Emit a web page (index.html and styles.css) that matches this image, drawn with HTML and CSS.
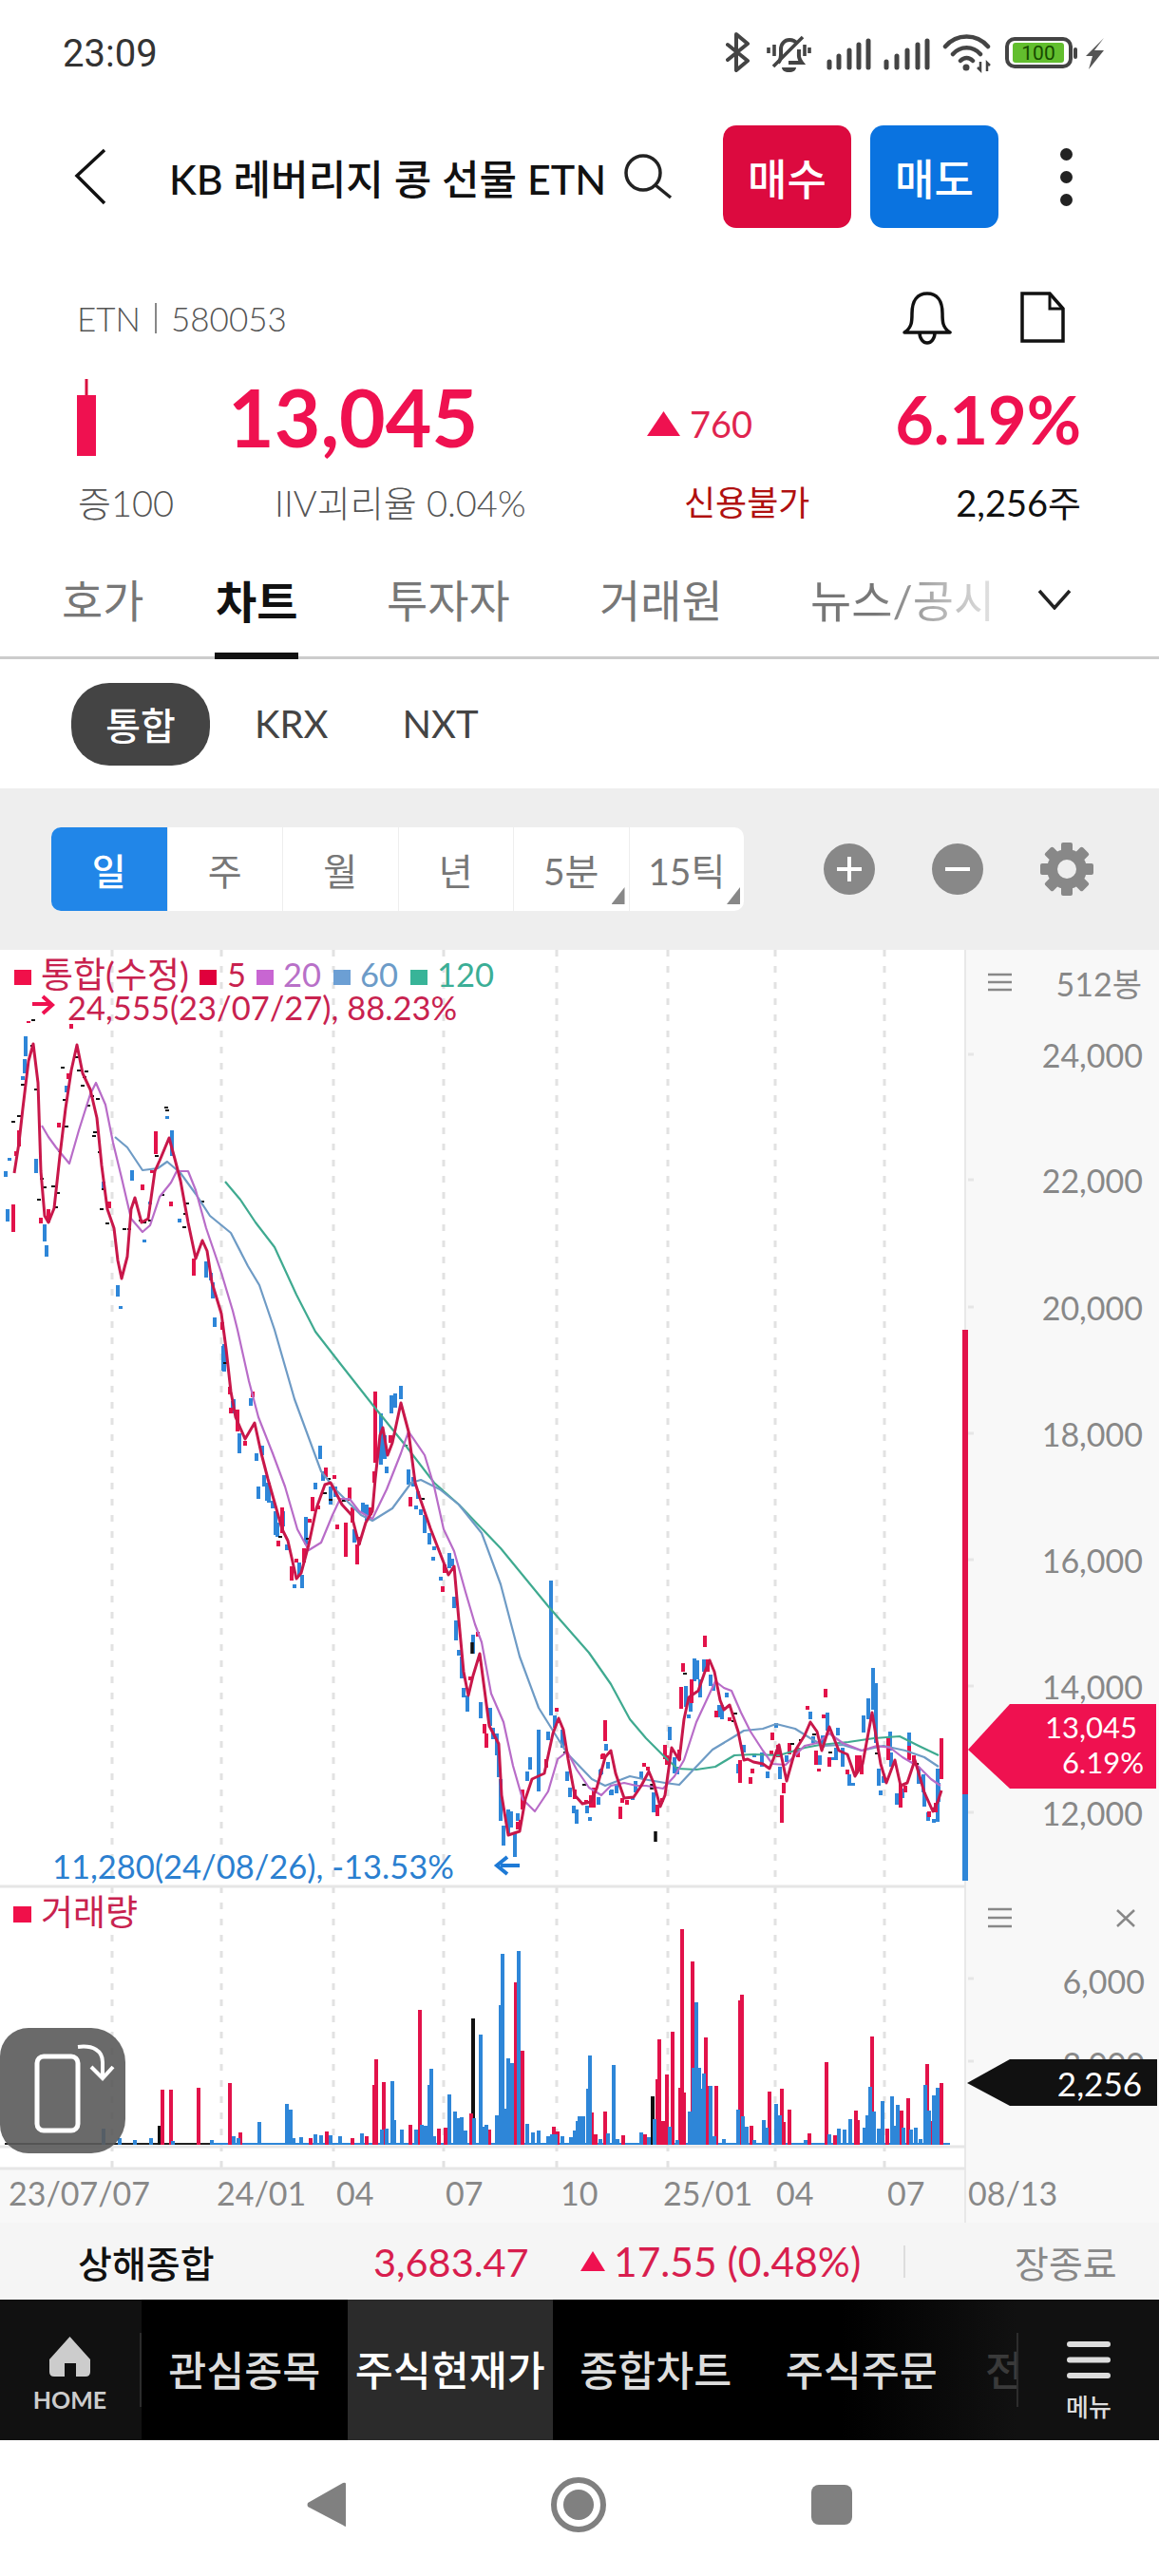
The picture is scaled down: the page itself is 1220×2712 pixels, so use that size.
FILE: index.html
```html
<!DOCTYPE html>
<html lang="ko">
  <head>
    <meta charset="UTF-8" />
    <meta name="viewport" content="width=device-width, initial-scale=1.0" />
    <title>KB 레버리지 콩 선물 ETN</title>
    <link rel="stylesheet" href="styles.css">
  </head>
  <body>
    <div class="status-bar">
      <span class="clock">23:09</span>
      <svg class="status-icons" width="400" height="50" viewBox="764 30 400 50">
        <path d="M766 47L787 64L775 74V36L787 46L766 63" fill="none" stroke="#444" stroke-width="4" stroke-linejoin="round" stroke-linecap="round"/>
        <path d="M819 66c4-3 3-9 3-14c0-6 4-10 9-10c3 0 6 1 8 4M841 52c0 6-1 9 3 14h-14" fill="none" stroke="#444" stroke-width="4"/>
        <path d="M814 70L845 39M809 50v6M815 47v12M847 47v12M852 50v6" fill="none" stroke="#444" stroke-width="3.6"/>
        <path d="M823 71h15c0 3-3 5-7.500 5s-7.500-2-7.500-5z" fill="#444"/>
        <path d="M873 65v6M883 59v12M894 53v18M904 47v24M914 43v28M933 65v6M944 59v12M955 53v18M966 47v24M976 43v28" fill="none" stroke="#444" stroke-width="5" stroke-linecap="round"/>
        <path d="M995 49c12-14 33-14 45 0M1003 57c8-9 21-9 29 0M1011 64c4-4 9-4 13 0" fill="none" stroke="#444" stroke-width="4.500" stroke-linecap="round"/>
        <circle cx="1017" cy="71" r="3.500" fill="#444"/>
        <path d="M1032 65v9l-3-3M1039 75v-9l3 3" fill="none" stroke="#444" stroke-width="2.500"/>
        <rect x="1060" y="41" width="67" height="29" rx="8" fill="#fff" stroke="#444" stroke-width="4"/>
        <rect x="1066" y="45" width="54" height="21" rx="3" fill="#62be2e"/>
        <text class="battery-text" x="1093" y="56">100</text>
        <rect x="1130" y="50" width="4" height="12" rx="2" fill="#444"/>
        <path d="M1162 40L1152 53L1162 53L1146 73L1150 59L1143 59Z" fill="#555"/>
      </svg>
    </div>

    <div class="header">
      <svg class="back" width="34" height="60" viewBox="0 0 34 60"><path d="M32 2L3 29L32 58" fill="none" stroke="#111" stroke-width="3.500"/></svg>
      <div class="title">KB 레버리지 콩 선물 ETN</div>
      <div class="search">
        <svg width="52" height="48" viewBox="0 0 52 48"><circle cx="21" cy="20" r="18" fill="none" stroke="#222" stroke-width="3.500"/><path d="M34 33L50 46" stroke="#222" stroke-width="3.500"/></svg>
      </div>
      <div class="order-btn buy">매수</div>
      <div class="order-btn sell">매도</div>
      <div class="kebab"><i></i><i></i><i></i></div>
    </div>

    <div class="code-row">
      <span>ETN</span><span class="bar"></span><span>580053</span>
      <svg class="bell" width="52" height="56" viewBox="950 307 52 56">
        <path d="M952 350c8-5 8-12 8-20c0-14 6-21 16-21s16 7 16 21c0 8 0 15 8 20z" fill="none" stroke="#111" stroke-width="3.500" stroke-linejoin="round"/>
        <path d="M968 350c0 7 4 11 8 11s8-4 8-11" fill="none" stroke="#111" stroke-width="3.500"/>
      </svg>
      <svg class="doc" width="47" height="56" viewBox="1074 307 47 56">
        <path d="M1076 309H1105L1119 325V359H1076Z" fill="none" stroke="#111" stroke-width="3.500"/>
        <path d="M1105 309V325H1119" fill="none" stroke="#111" stroke-width="3"/>
      </svg>
    </div>

    <div class="price-row">
      <svg width="20" height="84" viewBox="0 0 20 84"><path d="M10 0V18" stroke="#d8103f" stroke-width="3"/><rect y="17" width="20" height="64" fill="#ef1150"/></svg>
      <div class="price">13,045</div>
      <div class="change"><svg width="35" height="26" viewBox="0 0 35 26"><path d="M17.500 0L35 26H0Z" fill="#ef1150"/></svg><span>760</span></div>
      <div class="rate">6.19%</div>
    </div>

    <div class="meta-row">
      <span>증100</span>
      <span>IIV괴리율 0.04%</span>
      <span class="credit">신용불가</span>
      <span class="volume">2,256주</span>
    </div>

    <div class="tabs">
      <div class="tab">호가</div>
      <div class="tab active">차트</div>
      <div class="tab">투자자</div>
      <div class="tab">거래원</div>
      <div class="tab faded">뉴스/공시</div>
      <svg class="tab-more" width="36" height="22" viewBox="0 0 36 22"><path d="M2 2L18 20L34 2" fill="none" stroke="#222" stroke-width="3.500"/></svg>
    </div>

    <div class="market-tabs">
      <div class="market on">통합</div>
      <div class="market krx">KRX</div>
      <div class="market">NXT</div>
    </div>

    <div class="toolbar">
      <div class="periods">
        <div class="period on">일</div>
        <div class="period">주</div>
        <div class="period">월</div>
        <div class="period">년</div>
        <div class="period more">5분</div>
        <div class="period more">15틱</div>
      </div>
      <svg class="tool" width="54" height="54" viewBox="-27 -27 54 54"><circle r="27" fill="#888"/><path d="M-13 0H13M0 -13V13" stroke="#fff" stroke-width="4"/></svg>
      <svg class="tool minus" width="54" height="54" viewBox="-27 -27 54 54"><circle r="27" fill="#888"/><path d="M-13 0H13" stroke="#fff" stroke-width="4"/></svg>
      <svg class="tool gear" width="56" height="56" viewBox="-28 -28 56 56">
        <g fill="#888">
          <circle r="21"/>
          <rect x="-6" y="-28" width="12" height="56" rx="2"/>
          <rect x="-6" y="-28" width="12" height="56" rx="2" transform="rotate(45)"/>
          <rect x="-6" y="-28" width="12" height="56" rx="2" transform="rotate(90)"/>
          <rect x="-6" y="-28" width="12" height="56" rx="2" transform="rotate(135)"/>
        </g>
        <circle r="10" fill="#eee"/>
      </svg>
    </div>

    <div class="chart">
      <svg class="chart-svg" width="1220" height="1340" viewBox="0 1000 1220 1340">
        <!-- 축 배경 -->
        <rect x="1016" y="1000" width="204" height="1340" fill="#f8f8f8"/>
        <rect x="0" y="2284" width="1016" height="56" fill="#f8f8f8"/>
        <path d="M1016 1000V2340" stroke="#e8e8e8" stroke-width="2"/>
        <path class="grid" d="M118 1000V2282M233 1000V2282M351 1000V2282M467 1000V2282M586 1000V2282M703 1000V2282M816 1000V2282M931 1000V2282"/>
        <path d="M0 1986H1016M0 2260H1016M0 2283H1016" stroke="#e6e6e6" stroke-width="3"/>
        <path d="M1019 1110h6M1019 1242h6M1019 1376h6M1019 1509h6M1019 1642h6M1019 1775h6M1019 1908h6M1019 2083h6M1019 2170h6" stroke="#e6e6e6" stroke-width="3"/>

        <!-- 캔들 -->
        <path class="candle down" d="M8 1273V1286M27 1091V1112M26 1115V1130M24 1133V1137M6 1233V1239M10 1219V1222M38 1220V1235M47 1289V1307M49 1311V1323M70 1143V1150M109 1244V1251M139 1232V1243M124 1353V1365M127 1375V1378M181 1190V1217M176 1175V1178M158 1265V1268M189 1283V1287M152 1305V1308M217 1328V1345M222 1340V1348M224 1350V1367M226 1387V1397M235 1417V1443M246 1473V1487M264 1472V1480M236 1415V1444M245 1475V1488M252 1509V1530M270 1530V1538M276 1522V1532M278 1553V1565M272 1565V1578M281 1561V1580M283 1561V1582M287 1580V1588M290 1591V1616M292 1603V1618M298 1591V1607M302 1626V1632M315 1645V1660M318 1658V1672M310 1668V1672M322 1597V1626M337 1522V1536M332 1561V1568M340 1549V1559M348 1565V1584M353 1565V1576M373 1610V1624M382 1582V1593M386 1584V1601M412 1469V1488M416 1467V1482M422 1459V1473M401 1488V1542M405 1511V1536M407 1544V1551M430 1547V1563M435 1555V1565M440 1570V1578M438 1585V1589M443 1589V1595M447 1595V1614M452 1614V1626M457 1628V1632M456 1639V1643M464 1660V1664M473 1635V1651M476 1641V1649M478 1681V1693M480 1706V1727M483 1737V1743M486 1744V1767M488 1777V1787M492 1785V1802M498 1721V1741M506 1792V1809M516 1798V1817M519 1819V1831M523 1825V1848M525 1848V1871M527 1873V1917M530 1922V1943M535 1905V1930M538 1907V1924M542 1930V1955M545 1909V1917M555 1865V1875M558 1850V1863M567 1821V1886M580 1664V1806M577 1823V1832M584 1806V1819M592 1821V1840M597 1865V1875M600 1882V1892M607 1905V1920M604 1901V1909M618 1901V1909M621 1913V1917M632 1863V1869M638 1836V1840M630 1892V1899M644 1884V1890M621 1913V1917M630 1892V1900M633 1862V1868M638 1838V1843M640 1855V1862M643 1885V1890M649 1878V1888M669 1875V1887M666 1892V1895M675 1865V1872M688 1887V1908M705 1818V1832M710 1850V1867M713 1860V1868M722 1775V1797M725 1805V1809M727 1787V1802M731 1746V1770M734 1748V1768M737 1768V1787M741 1747V1760M748 1763V1775M751 1773V1780M765 1782V1787M760 1795V1810M757 1795V1808M777 1857V1867M783 1837V1845M794 1846V1850M802 1845V1860M808 1865V1872M817 1814V1819M821 1860V1873M828 1848V1855M853 1802V1810M856 1828V1835M863 1848V1858M871 1803V1822M866 1827V1840M882 1819V1827M877 1850V1853M880 1840V1853M887 1840V1860M894 1868V1880M898 1877V1880M909 1806V1824M914 1788V1810M919 1756V1800M922 1772V1835M925 1862V1880M927 1885V1890M930 1870V1877M937 1823V1843M938 1845V1860M944 1888V1900M950 1883V1893M957 1824V1850M967 1860V1878M972 1868V1887M973 1887V1902M977 1908V1917M983 1915V1919M987 1862V1918M988 1877V1897"/>
        <path class="candle up" d="M14 1268V1297M20 1190V1207M17 1212V1217M43 1282V1288M51 1273V1287M72 1130V1136M62 1182V1187M75 1078V1083M164 1191V1215M150 1247V1253M180 1265V1270M204 1325V1343M115 1265V1272M160 1232V1235M234 1392V1400M242 1460V1468M30 1075V1077M243 1482V1488M250 1484V1507M258 1517V1522M266 1465V1471M297 1587V1614M293 1622V1628M307 1649V1664M312 1641V1645M320 1630V1645M326 1599V1603M329 1576V1591M335 1585V1589M343 1545V1555M352 1553V1557M355 1605V1610M364 1603V1639M368 1566V1580M371 1587V1603M376 1626V1647M378 1618V1626M390 1587V1595M395 1465V1540M394 1549V1561M411 1511V1519M430 1509V1513M432 1576V1586M468 1647V1656M466 1670V1676M495 1765V1769M503 1718V1723M510 1815V1825M512 1825V1840M550 1884V1905M545 1918V1926M548 1916V1920M575 1852V1861M586 1798V1802M637 1811V1833M635 1846V1850M605 1884V1894M617 1895V1899M625 1882V1903M634 1847V1852M653 1902V1915M655 1893V1898M660 1895V1900M622 1890V1903M692 1900V1912M697 1893V1897M678 1856V1860M682 1860V1864M700 1837V1852M702 1848V1858M715 1842V1853M719 1751V1760M717 1776V1799M728 1768V1793M742 1722V1734M745 1747V1760M754 1801V1808M768 1808V1812M779 1853V1877M790 1871V1878M792 1862V1867M813 1824V1832M812 1843V1847M819 1837V1850M823 1890V1919M825 1877V1888M831 1835V1847M840 1840V1850M850 1796V1800M869 1778V1787M867 1805V1809M859 1843V1858M862 1862V1865M873 1850V1860M892 1863V1868M902 1848V1867M905 1848V1863M907 1858V1868M935 1830V1853M948 1878V1903M953 1880V1887M957 1838V1853M962 1848V1858M978 1907V1913M985 1898V1908M991 1830V1873"/>
        <path class="tick" d="M12 1181h4M18 1175h4M22 1142h4M33 1074h4M32 1101h4M36 1147h4M42 1241h4M45 1250h4M54 1249h4M59 1256h4M39 1263h4M57 1271h4M61 1212h4M68 1186h4M66 1158h4M64 1124h4M79 1113h4M81 1127h4M89 1128h4M87 1134h4M85 1143h4M95 1154h4M101 1157h4M91 1164h4M98 1192h4M97 1196h4M103 1213h4M107 1252h4M105 1273h4M111 1288h4M129 1294h4M134 1294h4M163 1217h4M173 1166h4M174 1169h4M169 1258h4M146 1285h4M150 1287h4M156 1285h4M187 1236h4M195 1267h4M193 1278h4M192 1292h4M211 1265h4M235 1435h4M293 1618h4M322 1620h4M344 1557h4M340 1572h4M346 1579h4M360 1580h4M425 1522h4M443 1578h4M593 1845h4M613 1879h4M684 1881h4M719 1762h4M770 1812h4M772 1804h4M832 1836h4M841 1832h4M855 1826h4M872 1845h4M921 1846h4M963 1857h4"/>
        <path d="M497 1729V1741M690 1928V1939M686 1878V1884" stroke="#111" stroke-width="3.500"/>

        <!-- 이동평균선 -->
        <polyline class="ma ma120" points="237,1244 253,1263 269,1287 289,1313 312,1363 332,1402 360,1438 393,1480 427,1522 457,1561 483,1584 527,1630 577,1691 620,1740 643,1773 663,1810 680,1830 698,1848 713,1862 733,1863 753,1860 773,1848 793,1847 820,1848 847,1840 863,1837 893,1834 920,1830 947,1828 967,1838 988,1848"/>
        <polyline class="ma ma60" points="121,1197 134,1208 150,1232 166,1230 176,1223 190,1235 206,1257 221,1280 243,1298 261,1333 273,1353 289,1400 310,1473 338,1549 353,1568 380,1595 392,1601 413,1588 433,1561 443,1558 463,1568 483,1584 507,1614 527,1668 547,1744 567,1798 597,1846 623,1873 637,1880 650,1875 663,1870 677,1873 700,1877 715,1879 730,1863 750,1842 770,1830 783,1822 803,1820 817,1815 837,1820 853,1830 867,1838 887,1837 907,1843 930,1838 953,1843 973,1850 988,1860"/>
        <polyline class="ma ma20" points="44,1185 51,1197 59,1208 73,1225 83,1190 95,1152 101,1140 111,1163 119,1203 128,1240 138,1283 150,1297 158,1290 168,1260 180,1245 186,1233 198,1233 206,1253 217,1293 233,1340 245,1380 250,1400 262,1454 272,1492 287,1530 300,1565 313,1610 325,1632 338,1624 350,1595 358,1578 368,1578 378,1591 392,1599 407,1568 422,1530 430,1507 447,1532 457,1565 467,1610 478,1633 490,1676 500,1710 507,1729 517,1783 530,1813 540,1859 550,1894 563,1907 577,1886 587,1852 597,1844 607,1863 620,1882 633,1890 643,1880 657,1877 670,1880 680,1880 698,1883 710,1870 720,1853 733,1813 753,1770 762,1777 770,1780 780,1803 790,1823 803,1843 813,1857 827,1858 847,1838 860,1835 873,1825 887,1835 907,1843 923,1838 937,1840 950,1850 967,1860 980,1873 990,1880"/>
        <polyline class="ma ma5" points="15,1235 20,1203 24,1167 30,1117 35,1099 40,1140 43,1233 47,1280 51,1287 57,1272 63,1217 69,1167 75,1127 81,1100 87,1130 95,1147 102,1177 107,1227 113,1273 120,1293 124,1327 128,1346 134,1323 138,1273 142,1261 149,1287 156,1283 163,1233 168,1222 178,1198 184,1220 190,1243 198,1287 206,1325 213,1306 218,1317 223,1350 233,1383 238,1420 243,1465 248,1492 258,1515 268,1498 275,1530 282,1557 297,1610 303,1622 312,1662 317,1656 325,1626 333,1588 342,1563 348,1561 360,1584 370,1595 378,1626 385,1603 392,1591 395,1557 400,1511 403,1503 408,1532 413,1519 422,1477 430,1507 437,1561 443,1580 453,1609 467,1645 472,1658 478,1649 483,1706 488,1760 493,1785 498,1764 505,1741 515,1817 525,1836 528,1890 535,1932 547,1928 553,1894 560,1873 573,1867 582,1825 588,1809 593,1821 598,1852 605,1890 613,1899 622,1897 628,1883 637,1850 643,1843 648,1867 657,1893 667,1892 675,1880 683,1865 688,1877 695,1902 700,1890 707,1840 715,1853 720,1810 725,1787 735,1780 742,1760 747,1748 752,1760 758,1790 762,1800 768,1795 777,1823 783,1853 787,1852 793,1855 803,1857 810,1862 820,1837 828,1875 837,1843 847,1827 853,1813 860,1823 865,1843 873,1818 883,1843 892,1847 900,1870 908,1857 918,1803 927,1857 933,1877 942,1853 948,1880 955,1877 963,1853 973,1887 982,1907 987,1897 991,1885"/>

        <!-- 거래량 -->
        <path d="M5 2257H225" stroke="#222" stroke-width="2"/>
        <path d="M225 2257H1000" stroke="#2e86d8" stroke-width="2"/>
        <path class="vol black" d="M168 2258V2238M498 2258V2125M687 2258V2207"/>
        <path class="vol up" d="M171 2258V2200M180 2258V2200M209 2258V2198M242 2258V2193M253 2258V2245M327 2258V2251M344 2258V2244M371 2258V2251M386 2258V2249M394 2258V2195M396 2258V2168M404 2258V2192M432 2258V2237M442 2258V2116M462 2258V2241M469 2258V2240M496 2258V2225M515 2258V2242M543 2258V2087M550 2258V2159M583 2258V2239M587 2258V2244M623 2258V2224M627 2258V2247M637 2258V2223M656 2258V2248M679 2258V2247M692 2258V2189M694 2258V2147M698 2258V2233M702 2258V2184M708 2258V2139M716 2258V2198M718 2258V2031M720 2258V2203M729 2258V2065M743 2258V2145M745 2258V2196M754 2258V2196M779 2258V2106M781 2258V2100M791 2258V2238M810 2258V2202M823 2258V2199M825 2258V2234M831 2258V2221M852 2258V2246M870 2258V2171M879 2258V2248M901 2258V2222M903 2258V2232M918 2258V2144M934 2258V2241M949 2258V2222M956 2258V2209M976 2258V2173M981 2258V2233M991 2258V2193"/>
        <path class="vol down" d="M109 2258V2241M126 2258V2251M142 2258V2253M159 2258V2251M182 2258V2254M223 2258V2253M246 2258V2249M251 2258V2251M273 2258V2234M302 2258V2215M306 2258V2221M309 2258V2251M317 2258V2250M332 2258V2247M338 2258V2248M348 2258V2248M358 2258V2249M381 2258V2246M402 2258V2242M407 2258V2241M413 2258V2191M415 2258V2232M423 2258V2242M438 2258V2242M444 2258V2237M448 2258V2238M452 2258V2195M454 2258V2178M457 2258V2249M473 2258V2205M479 2258V2223M482 2258V2230M486 2258V2229M490 2258V2243M499 2258V2230M506 2258V2142M509 2258V2239M512 2258V2237M523 2258V2227M527 2258V2111M529 2258V2057M532 2258V2220M535 2258V2167M539 2258V2172M546 2258V2054M555 2258V2236M561 2258V2245M567 2258V2243M577 2258V2249M581 2258V2247M585 2258V2247M592 2258V2249M601 2258V2250M605 2258V2243M608 2258V2233M610 2258V2228M614 2258V2228M619 2258V2199M621 2258V2164M632 2258V2252M640 2258V2246M646 2258V2174M650 2258V2252M675 2258V2245M683 2258V2250M689 2258V2231M705 2258V2239M713 2258V2253M726 2258V2223M730 2258V2177M733 2258V2108M736 2258V2177M739 2258V2199M741 2258V2183M748 2258V2196M752 2258V2249M762 2258V2252M777 2258V2221M782 2258V2228M786 2258V2239M794 2258V2253M804 2258V2232M807 2258V2240M817 2258V2215M821 2258V2227M848 2258V2253M873 2258V2247M883 2258V2241M889 2258V2242M895 2258V2231M910 2258V2240M913 2258V2227M916 2258V2197M920 2258V2223M925 2258V2241M929 2258V2212M939 2258V2207M942 2258V2238M945 2258V2216M951 2258V2240M959 2258V2242M964 2258V2240M969 2258V2252M974 2258V2195M978 2258V2222M983 2258V2206M987 2258V2198"/>

        <!-- 범례 -->
        <rect x="15" y="1021" width="18" height="16" fill="#f0104a"/>
        <text class="lbl red kr" x="43" y="1025">통합(수정)</text>
        <rect x="210" y="1021" width="18" height="16" fill="#e0003c"/>
        <text class="lbl red" x="239" y="1025">5</text>
        <rect x="270" y="1021" width="18" height="16" fill="#c866d2"/>
        <text class="lbl purple" x="298" y="1025">20</text>
        <rect x="351" y="1021" width="18" height="16" fill="#6c9fd4"/>
        <text class="lbl steel" x="379" y="1025">60</text>
        <rect x="432" y="1021" width="18" height="16" fill="#38b498"/>
        <text class="lbl teal" x="460" y="1025">120</text>
        <path d="M34 1057H52M45 1049L55 1058L45 1067" fill="none" stroke="#ef1150" stroke-width="4"/>
        <text class="lbl red" x="71" y="1060">24,555(23/07/27), 88.23%</text>
        <text class="lbl blue" x="55" y="1964">11,280(24/08/26), -13.53%</text>
        <path d="M547 1964H527M534 1955L523 1964L534 1973" fill="none" stroke="#1e7ad6" stroke-width="4"/>
        <rect x="14" y="2007" width="19" height="17" fill="#f0104a"/>
        <text class="lbl red kr" x="43" y="2012">거래량</text>

        <!-- 가격축 -->
        <path d="M1040 1026H1065M1040 1034H1065M1040 1042H1065M1040 2010H1065M1040 2019H1065M1040 2028H1065" stroke="#888" stroke-width="2.500"/>
        <path d="M1176 2011L1194 2028M1194 2011L1176 2028" stroke="#888" stroke-width="2.500"/>
        <text class="axis end" x="1202" y="1035">512봉</text>
        <text class="axis end" x="1203" y="1110">24,000</text>
        <text class="axis end" x="1203" y="1242">22,000</text>
        <text class="axis end" x="1203" y="1376">20,000</text>
        <text class="axis end" x="1203" y="1509">18,000</text>
        <text class="axis end" x="1203" y="1642">16,000</text>
        <text class="axis end" x="1203" y="1775">14,000</text>
        <text class="axis end" x="1203" y="1908">12,000</text>
        <text class="axis end" x="1205" y="2085">6,000</text>
        <text class="axis end" x="1205" y="2172">3,000</text>
        <path d="M1016 1400V1889" stroke="#e2124a" stroke-width="6"/>
        <path d="M1016 1889V1980" stroke="#2e86d8" stroke-width="6"/>
        <path d="M1019 1842L1063 1794H1217V1883H1063Z" fill="#ef1150"/>
        <text class="tag end" x="1197" y="1818">13,045</text>
        <text class="tag end" x="1204" y="1855">6.19%</text>
        <path d="M1018 2193L1063 2168H1218V2217H1063Z" fill="#111"/>
        <text class="tag big end" x="1202" y="2193">2,256</text>

        <!-- 시간축 -->
        <text class="axis" x="9" y="2308">23/07/07</text>
        <text class="axis" x="228" y="2308">24/01</text>
        <text class="axis" x="354" y="2308">04</text>
        <text class="axis" x="469" y="2308">07</text>
        <text class="axis" x="590" y="2308">10</text>
        <text class="axis" x="698" y="2308">25/01</text>
        <text class="axis" x="817" y="2308">04</text>
        <text class="axis" x="934" y="2308">07</text>
        <text class="axis" x="1019" y="2308">08/13</text>
      </svg>
      <div class="rotate-btn">
        <svg width="132" height="132" viewBox="0 0 132 132">
          <rect x="39" y="30" width="43" height="78" rx="7" fill="none" stroke="#fff" stroke-width="5"/>
          <path d="M82 20c16-2 26 4 26 16V52M96 41L108 53L119 41" fill="none" stroke="#fff" stroke-width="4"/>
        </svg>
      </div>
    </div>

    <div class="ticker">
      <span class="ticker-name">상해종합</span>
      <span class="ticker-price">3,683.47</span>
      <svg class="ticker-arrow" width="26" height="21" viewBox="0 0 26 21"><path d="M13 0L26 21H0Z" fill="#ef1150"/></svg>
      <span class="ticker-change">17.55 (0.48%)</span>
      <span class="ticker-sep"></span>
      <span class="ticker-state">장종료</span>
    </div>

    <div class="bottom-nav">
      <div class="nav-home">
        <svg width="43" height="42" viewBox="0 0 43 42"><path d="M21.500 0L43 24V37q0 5-5 5H28V28H16V42H5q-5 0-5-5V24Z" fill="#ccc"/></svg>
        <span>HOME</span>
      </div>
      <span class="nav-sep"></span>
      <div class="nav-items">
        <div class="nav-item">관심종목</div>
        <div class="nav-item on">주식현재가</div>
        <div class="nav-item">종합차트</div>
        <div class="nav-item">주식주문</div>
        <div class="nav-item last">전</div>
      </div>
      <span class="nav-sep"></span>
      <div class="nav-menu">
        <svg width="46" height="39" viewBox="0 0 46 39"><path d="M3 3H43M3 19.500H43M3 36H43" stroke="#ddd" stroke-width="6" stroke-linecap="round"/></svg>
        <span>메뉴</span>
      </div>
    </div>

    <div class="android-nav">
      <svg width="41" height="48" viewBox="0 0 41 48"><path d="M41 2V46Q41 48 39 46L1 26Q0 24 1 22L38 1Q41 0 41 2Z" fill="#808080"/></svg>
      <svg width="60" height="60" viewBox="-30 -30 60 60"><circle r="26" fill="none" stroke="#808080" stroke-width="6"/><circle r="16" fill="#808080"/></svg>
      <svg width="43" height="42" viewBox="0 0 43 42"><rect width="43" height="42" rx="8" fill="#808080"/></svg>
    </div>
  </body>
</html>
```

FILE: styles.css
```css
* {
  box-sizing: border-box;
  margin: 0;
  padding: 0;
}

body {
  width: 1220px;
  height: 2712px;
  background-color: #fff;
  font-family: Lato, "Noto Sans CJK KR", sans-serif;
  overflow: hidden;
}

svg {
  display: block;
  flex: none;
}

/* 상태바 */
.status-bar {
  display: flex;
  justify-content: space-between;
  height: 101px;
  padding: 30px 56px 0 66px;
}

.clock {
  font-family: Roboto, sans-serif;
  font-size: 40px;
  line-height: 54px;
  color: #333;
}

.battery-text {
  font-family: Roboto, sans-serif;
  font-size: 21px;
  fill: #174a00;
  text-anchor: middle;
  dominant-baseline: central;
}

/* 헤더 */
.header {
  display: flex;
  align-items: center;
  height: 170px;
  padding-left: 78px;
}

.back {
  margin-right: 66px;
}

.title {
  width: 478px;
  font-size: 43px;
  font-weight: 500;
  color: #111;
  white-space: nowrap;
}

.search {
  width: 105px;
}

.order-btn {
  display: flex;
  align-items: center;
  justify-content: center;
  width: 135px;
  height: 108px;
  border-radius: 14px;
  color: white;
  font-size: 45px;
  font-weight: 500;
}

.buy {
  background-color: #dc0a3f;
  margin-right: 20px;
}

.sell {
  background-color: #0a73e0;
}

.kebab {
  display: flex;
  flex-direction: column;
  gap: 11px;
  margin-left: 65px;
}

.kebab i {
  display: block;
  width: 13px;
  height: 13px;
  border-radius: 50%;
  background-color: #222;
}

/* 종목 정보 */
.code-row {
  display: flex;
  align-items: center;
  height: 128px;
  padding: 0 99px 0 81px;
  font-size: 35px;
  font-weight: 300;
  color: #555;
}

.code-row .bar {
  height: 32px;
  border-left: 2px solid #888;
  margin: 0 15px;
}

.bell {
  margin-left: auto;
  margin-right: 72px;
}

.price-row {
  display: grid;
  grid-template-columns: 159px 441px 1fr auto;
  align-items: end;
  height: 82px;
  padding: 0 82px 0 81px;
}

.price {
  font-size: 84px;
  font-weight: 700;
  line-height: 76px;
  padding-bottom: 6px;
  color: #ef1150;
}

.change {
  display: flex;
  align-items: center;
  gap: 10px;
  padding-bottom: 17px;
  font-size: 38px;
  line-height: 40px;
  color: #e0244f;
}

.rate {
  font-size: 70px;
  font-weight: 700;
  line-height: 78px;
  padding-bottom: 3px;
  color: #ef1150;
}

.meta-row {
  display: grid;
  grid-template-columns: 207px 431px 1fr auto;
  align-items: center;
  height: 96px;
  padding: 0 82px 4px;
  font-size: 38px;
  font-weight: 300;
  color: #555;
}

.credit {
  font-size: 36px;
  color: #b01010;
  font-weight: 400;
}

.volume {
  color: #111;
  font-weight: 400;
}

/* 탭 */
.tabs {
  display: grid;
  grid-template-columns: 162px 180px 224px 222px 239px auto;
  height: 117px;
  padding-left: 65px;
  border-bottom: 3px solid #ccc;
}

.tab {
  justify-self: start;
  display: flex;
  align-items: center;
  padding-bottom: 10px;
  font-size: 47px;
  color: #777;
  white-space: nowrap;
}

.tab.active {
  margin: 0 0 -3px -1px;
  padding: 0 1px 3px;
  font-weight: 700;
  color: #111;
  border-bottom: 7px solid #111;
}

.tab.faded {
  background: linear-gradient(90deg, #777 35%, #e4e4e4 100%);
  -webkit-background-clip: text;
  background-clip: text;
  color: transparent;
}

.tab-more {
  align-self: center;
  margin-bottom: 6px;
}

.market-tabs {
  display: flex;
  align-items: center;
  height: 136px;
  padding-left: 75px;
  font-size: 40px;
  color: #444;
}

.market.on {
  display: flex;
  align-items: center;
  justify-content: center;
  width: 146px;
  height: 87px;
  border-radius: 40px;
  background-color: #444;
  color: white;
  font-weight: 500;
}

.market.krx {
  margin: 0 78px 0 47px;
}

/* 차트 도구 */
.toolbar {
  display: flex;
  align-items: center;
  height: 170px;
  padding-left: 54px;
  background-color: #eee;
}

.periods {
  display: flex;
  height: 88px;
  border-radius: 10px;
  overflow: hidden;
  background-color: white;
  margin-right: 84px;
}

.period {
  position: relative;
  display: flex;
  align-items: center;
  justify-content: center;
  width: 121.500px;
  border-left: 1px solid #eee;
  font-size: 39px;
  color: #777;
}

.period.on {
  background-color: #2186e8;
  color: white;
  border-left: none;
  font-weight: 500;
}

.period.more::after {
  content: "";
  position: absolute;
  right: 4px;
  bottom: 7px;
  width: 14px;
  height: 18px;
  background-color: #888;
  clip-path: polygon(100% 0, 100% 100%, 0 100%);
}

.tool.minus {
  margin: 0 60px;
}

/* 차트 */
.chart {
  position: relative;
  height: 1340px;
}

.grid {
  fill: none;
  stroke: #e2e2e2;
  stroke-width: 3;
  stroke-dasharray: 7 10;
}

.candle,
.vol {
  fill: none;
  stroke-width: 4;
}

.candle.up,
.vol.up {
  stroke: #e2124a;
}

.candle.down,
.vol.down {
  stroke: #2e86d8;
}

.vol.black {
  stroke: #111;
}

.tick {
  fill: none;
  stroke: #111;
  stroke-width: 2;
}

.ma {
  fill: none;
  stroke-linejoin: round;
  stroke-width: 2.200;
}

.ma5 {
  stroke: #c8174a;
  stroke-width: 3;
}

.ma20 {
  stroke: #b86cc8;
}

.ma60 {
  stroke: #6e9bc5;
}

.ma120 {
  stroke: #3faa90;
}

.lbl,
.axis,
.tag {
  dominant-baseline: central;
}

.lbl {
  font-size: 34.500px;
}

.lbl.kr {
  font-size: 37px;
}

.lbl.red {
  fill: #c8224f;
}

.lbl.purple {
  fill: #b870c8;
}

.lbl.steel {
  fill: #6c9bc8;
}

.lbl.teal {
  fill: #3bae96;
}

.lbl.blue {
  fill: #2b7fd0;
}

.axis {
  font-size: 34px;
  fill: #888;
}

.tag {
  font-size: 31px;
  fill: white;
}

.tag.big {
  font-size: 35px;
}

.end {
  text-anchor: end;
}

.rotate-btn {
  position: absolute;
  left: 0;
  top: 1135px;
  width: 132px;
  height: 132px;
  border-radius: 30px 36px 36px 30px;
  background-color: rgba(90, 90, 90, 0.9);
}

/* 하단 */
.ticker {
  display: flex;
  align-items: center;
  height: 81px;
  padding-left: 82px;
  background-color: #f5f5f5;
  font-size: 39px;
}

.ticker-name {
  width: 311px;
  color: #111;
  font-weight: 500;
}

.ticker-price {
  width: 218px;
  font-size: 41.500px;
  color: #d81e4e;
}

.ticker-arrow {
  margin-right: 9px;
}

.ticker-change {
  width: 305px;
  font-size: 42.500px;
  color: #d81e4e;
}

.ticker-sep {
  height: 34px;
  border-left: 2px solid #ddd;
  margin-right: 115px;
}

.ticker-state {
  color: #888;
}

.bottom-nav {
  display: flex;
  height: 148px;
  background-color: #111;
  color: #ddd;
}

.nav-home {
  display: flex;
  flex-direction: column;
  align-items: center;
  gap: 9px;
  width: 147px;
  padding-top: 39px;
  font-size: 25px;
  font-weight: 700;
  color: #ccc;
}

.nav-sep {
  flex: none;
  align-self: center;
  width: 2px;
  height: 78px;
  background-color: #2c2c2c;
}

.nav-items {
  display: flex;
  width: 921px;
  overflow: hidden;
  background: linear-gradient(90deg, #000 80%, #111 100%);
}

.nav-item {
  flex: none;
  display: flex;
  align-items: center;
  justify-content: center;
  width: 216.500px;
  padding-bottom: 4px;
  font-size: 43.500px;
  font-weight: 500;
}

.nav-item.on {
  background-color: #2b2b2b;
  color: white;
}

.nav-item.last {
  width: 57px;
  padding-left: 22px;
  justify-content: flex-start;
  color: #3a3a3a;
}

.nav-menu {
  display: flex;
  flex-direction: column;
  align-items: center;
  gap: 10px;
  flex: 1;
  padding-top: 44px;
  font-size: 26px;
  font-weight: 500;
}

.android-nav {
  display: flex;
  align-items: center;
  height: 143px;
  padding: 0 323px 7px;
  justify-content: space-between;
}
```
